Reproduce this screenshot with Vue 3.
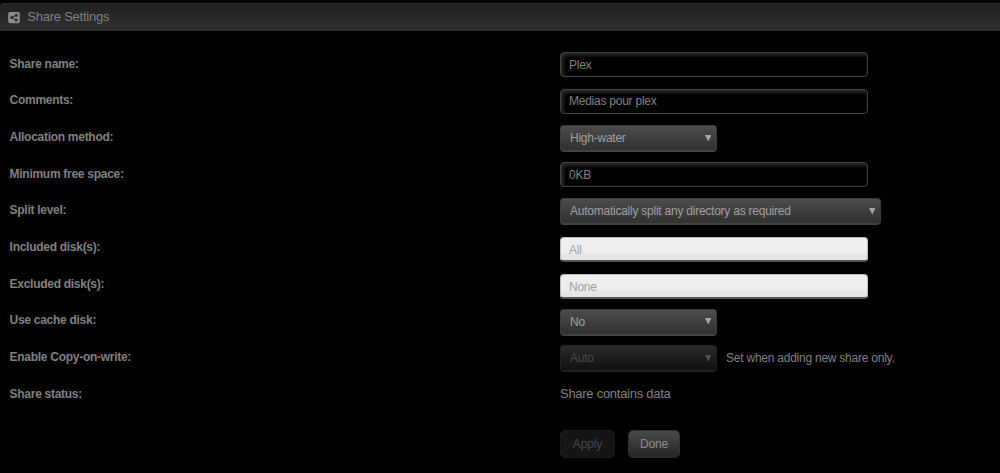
<template>
  <div class="share-page">
    <header class="title-bar">
      <svg class="share-icon" viewBox="0 0 12 12">
        <rect class="icon-box" x="0.2" y="0" width="11.6" height="11.2" rx="1.8" />
        <path class="icon-line" d="M8.2 3.2 4 5.6 8.2 8" />
        <circle class="icon-dot" cx="8.2" cy="3.3" r="1.5" />
        <circle class="icon-dot" cx="3.8" cy="5.6" r="1.5" />
        <circle class="icon-dot" cx="8.2" cy="7.9" r="1.5" />
      </svg>
      <h1 class="title">Share Settings</h1>
    </header>

    <form class="settings" @submit.prevent>
      <div v-for="field in fields" :key="field.label" class="row">
        <label class="label">{{ field.label }}:</label>

        <input v-if="field.type === 'text'" v-model="field.value" class="text-input" type="text" spellcheck="false" />

        <div v-else-if="field.type === 'select'" class="select-wrapper" :class="{ wide: field.wide, disabled: field.disabled }">
          <select v-model="field.value" class="select" :disabled="field.disabled">
            <option>{{ field.value }}</option>
          </select>
          <svg class="arrow" viewBox="0 0 7 7"><path d="M0 0h7L3.5 7z" /></svg>
        </div>

        <div v-else-if="field.type === 'disks'" class="disk-select">{{ field.value }}</div>

        <span v-else class="status">{{ field.value }}</span>

        <span v-if="field.note" class="note">{{ field.note }}</span>
      </div>

      <div class="actions">
        <button class="btn apply" type="submit" disabled>Apply</button>
        <button class="btn done" type="button">Done</button>
      </div>
    </form>
  </div>
</template>

<script setup>
import { reactive } from 'vue'

const fields = reactive([
  { label: 'Share name', type: 'text', value: 'Plex' },
  { label: 'Comments', type: 'text', value: 'Medias pour plex' },
  { label: 'Allocation method', type: 'select', value: 'High-water' },
  { label: 'Minimum free space', type: 'text', value: '0KB' },
  { label: 'Split level', type: 'select', value: 'Automatically split any directory as required', wide: true },
  { label: 'Included disk(s)', type: 'disks', value: 'All' },
  { label: 'Excluded disk(s)', type: 'disks', value: 'None' },
  { label: 'Use cache disk', type: 'select', value: 'No' },
  { label: 'Enable Copy-on-write', type: 'select', value: 'Auto', disabled: true, note: 'Set when adding new share only.' },
  { label: 'Share status', type: 'status', value: 'Share contains data' }
])
</script>

<style>
body {
  background: #000;
}
</style>

<style scoped>
.share-page {
  box-sizing: border-box;
  height: 473px;
  padding-top: 3px;
  overflow: hidden;
  background: #000;
  color: #808080;
  font-family: "Liberation Sans", Arial, sans-serif;
  font-size: 12px;
  letter-spacing: -0.24px;
}

.title-bar {
  display: flex;
  align-items: center;
  box-sizing: border-box;
  height: 28px;
  padding-left: 8px;
  border-top: 1px solid #2b2b2b;
  border-radius: 3px 0 0 0;
  background: linear-gradient(#212121, #303030);
}

.share-icon {
  width: 12px;
  height: 12px;
}

.icon-box {
  fill: #8c8c8c;
}

.icon-line {
  fill: none;
  stroke: #292929;
  stroke-width: 1;
}

.icon-dot {
  fill: #292929;
}

.title {
  margin: 0 0 1px 7.3px;
  font-size: 13px;
  font-weight: normal;
  line-height: 16px;
}

.settings {
  padding: 14px 0 0 9.6px;
}

.row {
  display: flex;
  align-items: flex-start;
  height: 36.7px;
}

.label {
  flex: none;
  width: 550.4px;
  padding-top: 11.6px;
  font-weight: bold;
  letter-spacing: -0.28px;
  line-height: 15px;
}

.text-input {
  box-sizing: border-box;
  width: 308px;
  height: 25px;
  margin: 7px 0 0;
  padding: 0 8px;
  border: 1px solid #404040;
  border-radius: 4px;
  outline: none;
  background: #000;
  box-shadow: inset 2px 2px 4px #333;
  color: #808080;
  font: inherit;
  letter-spacing: inherit;
}

.select-wrapper {
  position: relative;
  flex: none;
  width: 156.6px;
  height: 27px;
  margin-top: 6.69px;
}

.select-wrapper.wide {
  width: 320.6px;
}

.select {
  appearance: none;
  display: block;
  box-sizing: border-box;
  width: 100%;
  height: 100%;
  margin: 0;
  padding: 0 20px 0 9px;
  border: 1px solid #3b3b3b;
  border-bottom: 2px solid #424242;
  border-radius: 4px;
  background: linear-gradient(#4c4c4c, #303030);
  color: #a0a0a0;
  font: inherit;
  letter-spacing: inherit;
}

.arrow {
  position: absolute;
  top: 9.6px;
  right: 5.5px;
  width: 6.5px;
  height: 6.5px;
  fill: #a4a4a4;
}

.disabled .select {
  border-color: #202020;
  background: linear-gradient(#2a2a2a, #101010);
  color: #484848;
  opacity: 1;
}

.disabled .arrow {
  fill: #515151;
}

.disk-select {
  box-sizing: border-box;
  width: 308px;
  height: 25px;
  margin-top: 8.5px;
  padding: 5px 8px 0;
  border: 1px solid #bbb;
  border-bottom: 2px solid #555;
  border-radius: 4px;
  background: linear-gradient(#eee 70%, #e5e5e5 72%);
  color: #a0a0a0;
  line-height: 15px;
}

.note {
  padding: 12px 0 0 9.5px;
  line-height: 15px;
}

.status {
  padding-top: 11px;
  font-size: 13px;
  letter-spacing: -0.27px;
  line-height: 16px;
}

.actions {
  display: flex;
  gap: 13px;
  padding: 18px 0 0 550.4px;
}

.btn {
  box-sizing: border-box;
  height: 28px;
  margin: 0;
  padding: 0;
  border: 1px solid #303030;
  border-radius: 5px;
  background: linear-gradient(#4a4a4a, #252525);
  color: #8c8c8c;
  font: inherit;
  letter-spacing: -0.15px;
}

.apply {
  width: 55px;
  border-color: #181818;
  background: #151515;
  color: #484848;
}

.done {
  width: 52px;
}
</style>
